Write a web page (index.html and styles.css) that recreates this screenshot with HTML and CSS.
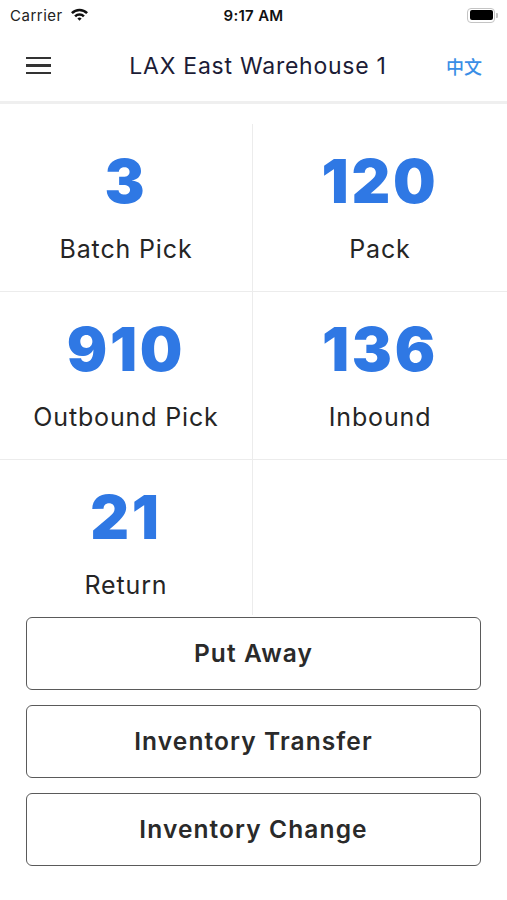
FILE: index.html
```html
<!DOCTYPE html>
<html>
<head>
<meta charset="utf-8">
<link rel="stylesheet" href="styles.css">
</head>
<body>
<div class="app">
  <div class="status">
    <div class="status-left">
      <span class="carrier">Carrier</span>
      <svg class="wifi" width="19" height="14" viewBox="0 0 19 14">
        <path d="M1 5.2 A12 12 0 0 1 18 5.2 L16.2 7 A9.5 9.5 0 0 0 2.8 7 Z" fill="#111"/>
        <path d="M4.2 8.4 A7.5 7.5 0 0 1 14.8 8.4 L13 10.2 A5 5 0 0 0 6 10.2 Z" fill="#111"/>
        <path d="M7.4 11.6 A3 3 0 0 1 11.6 11.6 L9.5 13.7 Z" fill="#111"/>
      </svg>
    </div>
    <div class="time">9:17 AM</div>
    <div class="battery">
      <div class="battery-body"><div class="battery-fill"></div></div>
      <div class="battery-nub"></div>
    </div>
  </div>

  <div class="header">
    <div class="menu">
      <span></span><span></span><span></span>
    </div>
    <div class="title">LAX East Warehouse 1</div>
    <div class="lang">中文</div>
  </div>

  <div class="grid-area">
    <div class="grid">
      <div class="cell"><div class="num">3</div><div class="label">Batch Pick</div></div>
      <div class="cell"><div class="num">120</div><div class="label">Pack</div></div>
      <div class="cell"><div class="num">910</div><div class="label">Outbound Pick</div></div>
      <div class="cell"><div class="num">136</div><div class="label">Inbound</div></div>
      <div class="cell"><div class="num">21</div><div class="label">Return</div></div>
      <div class="cell"></div>
    </div>
  </div>

  <div class="actions">
    <button class="btn">Put Away</button>
    <button class="btn">Inventory Transfer</button>
    <button class="btn">Inventory Change</button>
  </div>
</div>
</body>
</html>
```

FILE: styles.css
```css
* { box-sizing: border-box; }
html, body { margin: 0; padding: 0; background: #fff; }
body { font-family: Inter, "Noto Sans", sans-serif; }

.app {
  width: 507px;
  height: 900px;
  display: flex;
  flex-direction: column;
  overflow: hidden;
}

.status {
  height: 30px;
  display: flex;
  align-items: center;
  justify-content: space-between;
  padding: 0 9px 0 10px;
  position: relative;
}
.status-left { display: flex; align-items: center; gap: 7px; }
.carrier { font-size: 15px; color: #222; letter-spacing: 0.5px; }
.wifi { display: block; margin-top: -2px; }
.time {
  position: absolute;
  left: 0; right: 0;
  text-align: center;
  font-size: 15px;
  font-weight: 600;
  color: #111;
  letter-spacing: 0.3px;
  pointer-events: none;
}
.battery { display: flex; align-items: center; gap: 1px; }
.battery-body {
  width: 28px;
  height: 15px;
  border: 1.5px solid #c4c4c4;
  border-radius: 4px;
  padding: 1.5px;
}
.battery-fill { width: 100%; height: 100%; background: #000; border-radius: 2px; }
.battery-nub { width: 2px; height: 5px; background: #c4c4c4; border-radius: 0 1px 1px 0; }

.header {
  height: 74px;
  display: grid;
  grid-template-columns: 1fr auto 1fr;
  align-items: center;
  padding: 0 25px 0 26px;
  border-bottom: 3px solid #efefef;
}
.menu { width: 25px; display: flex; flex-direction: column; gap: 5px; }
.menu span { display: block; height: 2.5px; background: #333; }
.title { font-size: 23px; color: #1c1c36; letter-spacing: 0.75px; margin-left: 8px; }
.lang {
  justify-self: end;
  font-size: 18px;
  font-weight: 500;
  color: #3a8ee6;
  font-family: "Noto Sans CJK SC", sans-serif;
}

.grid-area { flex: 1; overflow: hidden; padding-top: 20px; }
.grid {
  display: grid;
  grid-template-columns: 253px 1fr;
  grid-auto-rows: 168px;
}
.cell {
  display: flex;
  flex-direction: column;
  align-items: center;
  border-bottom: 1px solid #ececec;
}
.cell:nth-child(odd) { border-right: 1px solid #ececec; }
.num {
  margin-top: 26px;
  font-size: 60px;
  font-weight: 900;
  line-height: 62px;
  color: #2f78e4;
  letter-spacing: 2.8px;
}
.label {
  margin-top: 22px;
  font-size: 25px;
  line-height: 30px;
  color: #252525;
  letter-spacing: 0.85px;
}

.actions {
  display: flex;
  flex-direction: column;
  gap: 14.5px;
  padding: 2px 26px 34px;
}
.btn {
  height: 73.5px;
  background: #fff;
  border: 1.5px solid #5a5a5a;
  border-radius: 6px;
  font-family: Inter, "Noto Sans", sans-serif;
  font-size: 24.5px;
  font-weight: 600;
  color: #2a2a2a;
  letter-spacing: 1.1px;
}
```
